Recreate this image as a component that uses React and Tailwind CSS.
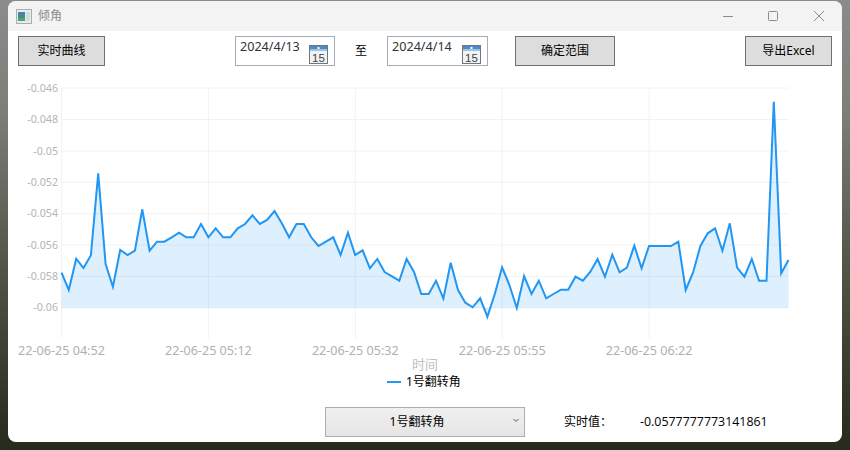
import React from "react";

const ys = [272.7,290,258.7,268,255.3,173.3,264,286.7,250,255,250.7,209.3,250.7,241.7,241.7,237.3,232.7,237.3,237.3,224,237.3,228.3,237.3,237.3,228.3,224,215.3,224,220,211,223.3,237.3,224,224,237.3,246,241.7,237.3,255,232.7,255,250.3,268.3,259,272,276.3,280.7,259,272,294,294,280.7,298.7,262.7,290,302.7,307.3,298.3,316.7,294,267.3,285,308,276,294,280.7,298.3,294,289.7,289.7,276.7,280.7,272,259,276.7,254.7,272.3,267.7,245.7,268.3,246,246,246,246,241.7,290,272.7,246,233.3,228.3,250.7,223.3,267.7,276.7,259,280.7,280.7,101.7,273.3,260];
const step = (788.5 - 61.5) / 99;
const pts = ys.map((y, i) => `${(61.5 + i * step).toFixed(1)},${y}`).join(" ");
const yTicks = [["-0.046",88],["-0.048",119.5],["-0.05",151],["-0.052",182.3],["-0.054",213.7],["-0.056",245],["-0.058",276.4],["-0.06",307.8]];
const xTicks = [["22-06-25 04:52",61.5],["22-06-25 05:12",208.4],["22-06-25 05:32",355.3],["22-06-25 05:55",502.2],["22-06-25 06:22",649.1]];
const labelFont = "'Noto Sans','Noto Sans CJK SC',sans-serif";

function Calendar() {
  return (
    <svg width="19" height="19" viewBox="0 0 19 19" className="shrink-0">
      <rect x="0.5" y="0.5" width="18" height="18" fill="#f1f3f4" stroke="#6f767c" />
      <rect x="1" y="1" width="17" height="3" fill="#4a8cc9" />
      <rect x="1" y="4" width="17" height="2" fill="#9cc3e2" />
      <rect x="8.5" y="2" width="2" height="2" fill="#ffffff" />
      <text x="9.5" y="16.5" textAnchor="middle" fontSize="11.5" fill="#444444" fontFamily="'Liberation Sans',sans-serif">15</text>
    </svg>
  );
}

function DateBox({ value, w }) {
  return (
    <div className={`${w} h-[30px] border border-[#a3adb8] bg-white flex items-start justify-between pl-[4px] pr-[6px]`}>
      <span className="text-[12.6px] leading-[18px] mt-[1px] text-[#333333]">{value}</span>
      <div className="mt-[8px]"><Calendar /></div>
    </div>
  );
}

function Btn({ children, w }) {
  return (
    <div className={`${w} h-[30px] shrink-0 border border-[#707070] bg-[#dddddd] flex items-center justify-center text-[12px] text-black`}>
      {children}
    </div>
  );
}

export default function App() {
  return (
    <div className="w-[850px] h-[450px] overflow-hidden bg-[linear-gradient(180deg,#8a8b8a_0%,#7c7e78_25%,#4d5243_62%,#2b3022_94%,#262b1e_100%)] pt-[1px] pl-[8px] font-['Noto_Sans','Noto_Sans_CJK_SC',sans-serif]">
      <div className="w-[834px] h-[441px] bg-white rounded-[8px] overflow-hidden flex flex-col">
        <div className="h-[30px] shrink-0 bg-[#f3f3f3] flex items-center pl-[8px]">
          <svg width="16" height="15" viewBox="0 0 16 15" className="shrink-0">
            <rect x="0.5" y="0.5" width="15" height="14" fill="#e8ecec" stroke="#a9aeae" />
            <rect x="2" y="3" width="7" height="9" fill="#3f8f8c" />
            <rect x="2" y="3" width="7" height="3" fill="#4a7fb0" />
            <rect x="2" y="9" width="7" height="3" fill="#58a06a" />
            <rect x="10" y="3" width="4" height="9" fill="#cfe0dc" />
          </svg>
          <span className="ml-[6px] text-[12px] text-[#8a8a8a]">倾角</span>
          <div className="ml-auto flex items-center">
            <svg width="12" height="12" viewBox="0 0 12 12" className="mr-[33px]"><path d="M1 6.5H11" stroke="#8a8a8a" /></svg>
            <svg width="12" height="12" viewBox="0 0 12 12" className="mr-[34px]"><rect x="1.5" y="1.5" width="9" height="9" rx="1" fill="none" stroke="#8a8a8a" /></svg>
            <svg width="12" height="12" viewBox="0 0 12 12" className="mr-[17px]"><path d="M1 1L11 11M11 1L1 11" stroke="#8a8a8a" /></svg>
          </div>
        </div>

        <div className="h-[35px] shrink-0 pt-[5px] pl-[10px] flex items-start">
          <Btn w="w-[87px]">实时曲线</Btn>
          <div className="ml-[130px]"><DateBox value="2024/4/13" w="w-[100px]" /></div>
          <span className="ml-[20px] mt-[7px] text-[12px] leading-[16px] text-black">至</span>
          <div className="ml-[20px]"><DateBox value="2024/4/14" w="w-[101px]" /></div>
          <div className="ml-[27px]"><Btn w="w-[100px]">确定范围</Btn></div>
          <div className="ml-[130px]"><Btn w="w-[87px]">导出Excel</Btn></div>
        </div>

        <svg width="834" height="306" viewBox="8 66 834 306" className="block shrink-0">
          {yTicks.map(([t, y]) => (
            <g key={t}>
              <line x1="61.5" x2="788.5" y1={y} y2={y} stroke="#f2f2f2" strokeWidth="1" />
              <text x="58" y={y + 3.5} textAnchor="end" fontSize="10.7" fill="#b5b5b5" fontFamily={labelFont}>{t}</text>
            </g>
          ))}
          {xTicks.map(([t, x]) => (
            <g key={t}>
              <line x1={x} x2={x} y1="88" y2="338" stroke="#f2f2f2" strokeWidth="1" />
              <text x={x} y="355" textAnchor="middle" fontSize="12.6" fill="#b0b0b0" fontFamily={labelFont}>{t}</text>
            </g>
          ))}
          <polygon points={`61.5,307.8 ${pts} 788.5,307.8`} fill="#2196f3" fillOpacity="0.15" />
          <polyline points={pts} fill="none" stroke="#2196f3" strokeWidth="2" strokeLinejoin="miter" />
          <text x="425" y="369" textAnchor="middle" fontSize="13" fill="#c0c0c0" fontFamily={labelFont}>时间</text>
        </svg>

        <div className="h-[20px] shrink-0 flex items-center pl-[378px]">
          <span className="w-[14px] h-[2px] ml-[1px] bg-[#2196f3]" />
          <span className="ml-[5px] text-[12px] text-black">1号翻转角</span>
        </div>

        <div className="pt-[15px] pl-[317px] flex items-center">
          <div className="relative w-[200px] h-[30px] border border-[#adadad] bg-[linear-gradient(180deg,#f0f0f0,#e5e5e5)] flex items-center justify-center pr-[16px] text-[12px] text-black">
            1号翻转角
            <svg width="6" height="5" viewBox="0 0 6 5" className="absolute right-[5px] top-[10px]"><path d="M0.5 1L3 3.5L5.5 1" fill="none" stroke="#555555" /></svg>
          </div>
          <span className="ml-[39px] text-[12px] text-black">实时值：</span>
          <span className="ml-[28px] text-[12.4px] text-black font-['Open_Sans',sans-serif]">-0.0577777773141861</span>
        </div>
      </div>
    </div>
  );
}
